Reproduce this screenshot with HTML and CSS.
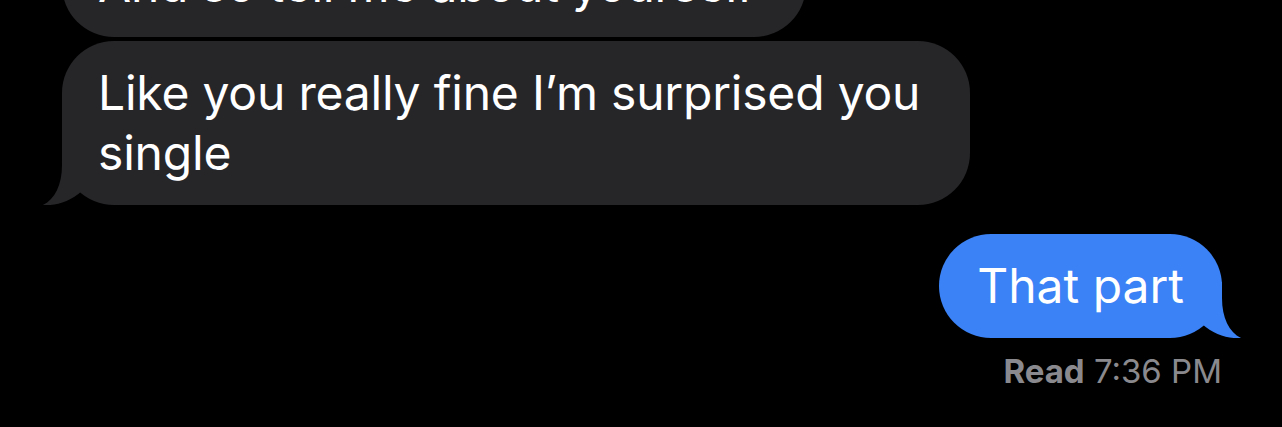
FILE: index.html
```html
<!DOCTYPE html>
<html lang="en">
<head>
    <meta charset="UTF-8">
    <meta name="viewport" content="width=device-width, initial-scale=1.0">
    <title>Messages</title>
    <link rel="stylesheet" href="styles.css">
</head>
<body>

<div class="thread">
    <div class="bubble them first">And so tell me about yourself</div>

    <div class="bubble them last">
        Like you really fine I’m surprised you single
        <svg class="tail" viewBox="0 0 60 56" width="60" height="56"><path d="M22,0 L22,16 C22,36 15,50 3,56 C15,57 30,53 42,42 L42,0 Z"/></svg>
    </div>

    <div class="bubble me last">
        That part
        <svg class="tail" viewBox="0 0 60 56" width="60" height="56"><path d="M22,0 L22,16 C22,36 15,50 3,56 C15,57 30,53 42,42 L42,0 Z"/></svg>
    </div>

    <div class="receipt"><b>Read</b> 7:36 PM</div>
</div>

</body>
</html>
```

FILE: styles.css
```css
body {
    margin: 0;
    background-color: #000;
    font-family: Inter, "Noto Sans", sans-serif;
    color: #fff;
    overflow: hidden;
}

.thread {
    display: flex;
    flex-direction: column;
    padding: 0 60px 0 62px;
}

.bubble {
    position: relative;
    font-size: 48px;
    line-height: 60px;
    letter-spacing: -0.2px;
    padding: 22px 36px;
    border-radius: 52px;
    max-width: 836px;
}

.them {
    align-self: flex-start;
    background-color: #262629;
    margin-top: 4px;
}

.them.first {
    margin-top: -67px;
    padding-right: 52px;
}

.me {
    align-self: flex-end;
    background-color: #3a82f6;
    margin-top: 29px;
    padding: 22px 38px;
    letter-spacing: 0;
}

.tail {
    position: absolute;
    bottom: 0;
    left: -22px;
}

.them .tail {
    fill: #262629;
}

.me .tail {
    left: auto;
    right: -22px;
    transform: scaleX(-1);
    fill: #3a82f6;
}

.receipt {
    align-self: flex-end;
    margin-top: 13px;
    font-size: 33px;
    line-height: 40px;
    color: #8a8a8e;
}

.receipt b {
    font-weight: 650;
}
```
